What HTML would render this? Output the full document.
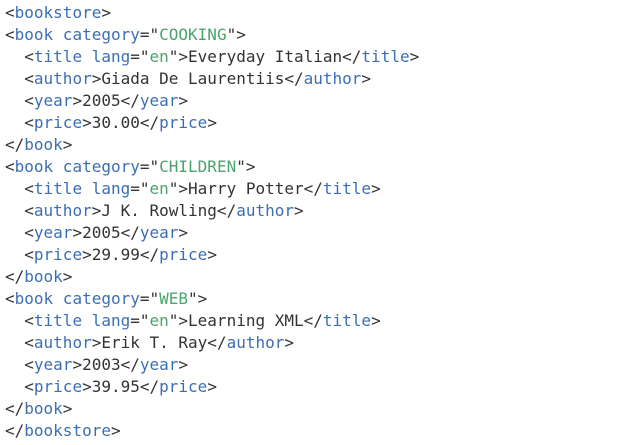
<html><head><style>
body{margin:0;background:#fff;}
pre{margin:0;padding:2px 0 0 5px;font-family:"DejaVu Sans Mono","Liberation Mono",monospace;font-size:16px;line-height:22px;color:#333;}
.t{color:#3c6eb4}.v{color:#4ca36e}
</style></head><body><pre>&lt;<span class="t">bookstore</span>&gt;
&lt;<span class="t">book category</span>="<span class="v">COOKING</span>"&gt;
  &lt;<span class="t">title lang</span>="<span class="v">en</span>"&gt;Everyday Italian&lt;/<span class="t">title</span>&gt;
  &lt;<span class="t">author</span>&gt;Giada De Laurentiis&lt;/<span class="t">author</span>&gt;
  &lt;<span class="t">year</span>&gt;2005&lt;/<span class="t">year</span>&gt;
  &lt;<span class="t">price</span>&gt;30.00&lt;/<span class="t">price</span>&gt;
&lt;/<span class="t">book</span>&gt;
&lt;<span class="t">book category</span>="<span class="v">CHILDREN</span>"&gt;
  &lt;<span class="t">title lang</span>="<span class="v">en</span>"&gt;Harry Potter&lt;/<span class="t">title</span>&gt;
  &lt;<span class="t">author</span>&gt;J K. Rowling&lt;/<span class="t">author</span>&gt;
  &lt;<span class="t">year</span>&gt;2005&lt;/<span class="t">year</span>&gt;
  &lt;<span class="t">price</span>&gt;29.99&lt;/<span class="t">price</span>&gt;
&lt;/<span class="t">book</span>&gt;
&lt;<span class="t">book category</span>="<span class="v">WEB</span>"&gt;
  &lt;<span class="t">title lang</span>="<span class="v">en</span>"&gt;Learning XML&lt;/<span class="t">title</span>&gt;
  &lt;<span class="t">author</span>&gt;Erik T. Ray&lt;/<span class="t">author</span>&gt;
  &lt;<span class="t">year</span>&gt;2003&lt;/<span class="t">year</span>&gt;
  &lt;<span class="t">price</span>&gt;39.95&lt;/<span class="t">price</span>&gt;
&lt;/<span class="t">book</span>&gt;
&lt;/<span class="t">bookstore</span>&gt;</pre></body></html>
